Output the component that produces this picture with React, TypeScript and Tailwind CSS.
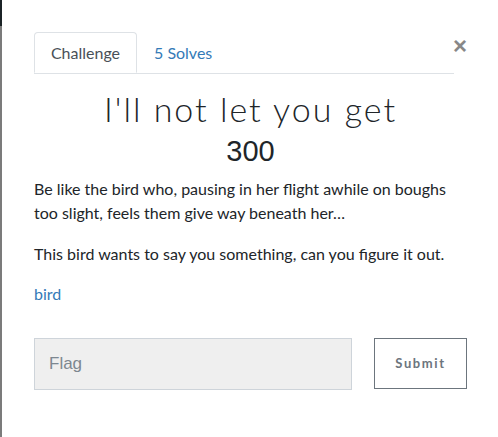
import React from "react";

export default function App() {
  return (
    <div className="relative w-[498px] h-[437px] bg-white overflow-hidden" style={{ fontFamily: "Lato, 'Open Sans', sans-serif" }}>
      <div className="absolute left-0 top-0 w-[2px] h-[26px] bg-[#1b2326]" />
      <div className="absolute left-0 top-[26px] w-[2px] h-[411px] bg-[#7b7b7b]" />
      <div className="pl-[34px] pr-[31px] pt-[32px]">
        <div className="flex items-start">
          <div className="flex flex-1 border-b border-[#dee2e6]">
            <div className="w-[103px] h-[41px] -mb-px border border-[#dee2e6] border-b-white rounded-t-[4px] bg-white flex items-center justify-center text-[16px] text-[#495057]">
              Challenge
            </div>
            <div className="h-[41px] px-[17px] flex items-center text-[16px] text-[#337ab7]">
              5 Solves
            </div>
          </div>
          <button className="w-[13px] mt-[2px] text-[#888] text-[24px] leading-none font-bold flex justify-end" style={{ fontFamily: "'Liberation Sans', Arial, sans-serif" }}>
            ×
          </button>
        </div>
        <div className="text-center mt-[15px]">
          <h2 className="text-[34px] leading-[40px] font-light tracking-[2px] text-[#212529]" style={{ fontFamily: "Lato, sans-serif" }}>
            I'll not let you get
          </h2>
          <div className="mt-[7px] text-[29px] leading-[30px] text-[#212529]" style={{ fontFamily: "'Liberation Sans', Arial, sans-serif" }}>
            300
          </div>
        </div>
        <div className="mt-[11px] text-[16px] leading-[24px] text-[#212529]">
          <p>Be like the bird who, pausing in her flight awhile on boughs too slight, feels them give way beneath her…</p>
          <p className="mt-[17px]">This bird wants to say you something, can you figure it out.</p>
          <p className="mt-[16px] text-[#337ab7]">bird</p>
        </div>
        <div className="flex mt-[32px]">
          <div className="w-[318px] h-[52px] bg-[#efefef] border border-[#ced4da] flex items-center pl-[14px] text-[17px] text-[#7d8790]" style={{ fontFamily: "'Liberation Sans', Arial, sans-serif" }}>
            Flag
          </div>
          <div className="ml-auto w-[93px] h-[51px] border border-[#6c757d] flex items-center justify-center text-[13px] font-bold tracking-[1.6px] text-[#6c757d]">
            Submit
          </div>
        </div>
      </div>
    </div>
  );
}
